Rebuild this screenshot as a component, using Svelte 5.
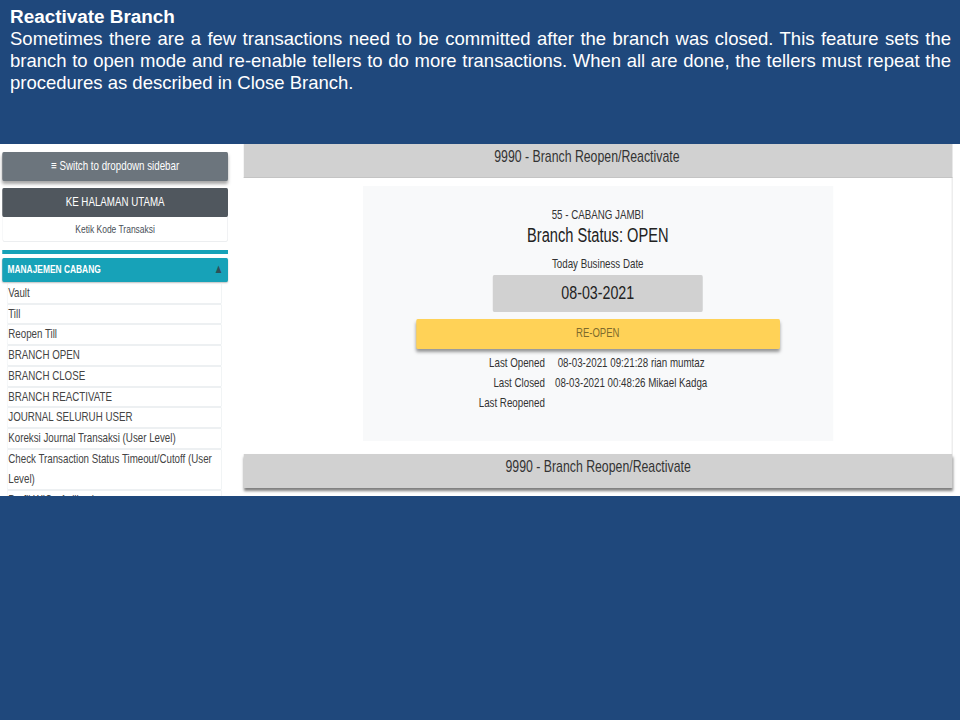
<script>
  const menu_items = [
    'Vault',
    'Till',
    'Reopen Till',
    'BRANCH OPEN',
    'BRANCH CLOSE',
    'BRANCH REACTIVATE',
    'JOURNAL SELURUH USER',
    'Koreksi Journal Transaksi (User Level)',
    'Check Transaction Status Timeout/Cutoff (User Level)',
    'Profil WIC - Aplikasi'
  ]

  const history = [
    { label: 'Last Opened', value: '08-03-2021 09:21:28 rian mumtaz' },
    { label: 'Last Closed', value: '08-03-2021 00:48:26 Mikael Kadga' },
    { label: 'Last Reopened', value: '' }
  ]
</script>

<div class="slide">
  <section class="intro">
    <h1>Reactivate Branch</h1>
    <p>
      Sometimes there are a few transactions need to be committed after the branch was closed. This feature sets the
      branch to open mode and re-enable tellers to do more transactions. When all are done, the tellers must repeat the
      procedures as described in Close Branch.
    </p>
  </section>

  <!-- the pasted screenshot is 1280 wide, squeezed to fit the slide -->
  <section class="shot">
    <aside class="sidebar">
      <button class="switch-button">≡ Switch to dropdown sidebar</button>
      <button class="home-button">KE HALAMAN UTAMA</button>
      <div class="code-input">Ketik Kode Transaksi</div>
      <div class="teal-rule"></div>
      <div class="group-head">
        <span>MANAJEMEN CABANG</span>
        <span class="caret">▲</span>
      </div>
      <ul class="menu">
        {#each menu_items as item}
          <li>{item}</li>
        {/each}
      </ul>
    </aside>

    <main class="panel">
      <header class="panel-head">9990 - Branch Reopen/Reactivate</header>
      <div class="panel-body">
        <div class="card">
          <div class="branch-name">55 - CABANG JAMBI</div>
          <div class="branch-status">Branch Status: OPEN</div>
          <div class="date-label">Today Business Date</div>
          <div class="date-box">08-03-2021</div>
          <button class="reopen-button">RE-OPEN</button>
          <div class="history">
            {#each history as row}
              <span class="history-label">{row.label}</span>
              <span class="history-value">{row.value}</span>
            {/each}
          </div>
        </div>
      </div>
      <footer class="panel-foot">9990 - Branch Reopen/Reactivate</footer>
    </main>
  </section>
</div>

<style>
  :global(body) {
    margin: 0;
    background: #1f487c;
  }

  .slide {
    width: 960px;
    height: 720px;
    background: #1f487c;
    overflow: hidden;
    font-family: "Liberation Sans", Arial, sans-serif;
  }

  .intro {
    box-sizing: border-box;
    height: 144px;
    padding: 6px 9px 0 10px;
    color: #fff;
    font-size: 18.5px;
    line-height: 22px;
  }

  h1 {
    margin: 0;
    font-size: 18.9px;
    line-height: 22px;
    font-weight: 700;
  }

  .intro p {
    margin: 0;
    text-align: justify;
  }

  .shot {
    display: flex;
    align-items: flex-start;
    width: 1280px;
    height: 352px;
    overflow: hidden;
    background: #fff;
    transform: scaleX(0.75);
    transform-origin: left top;
  }

  button {
    display: block;
    padding: 0 0 2px;
    border: none;
    font-family: inherit;
  }

  .sidebar {
    flex: none;
    box-sizing: border-box;
    width: 301px;
    margin: 8px 0 0 3px;
  }

  .switch-button {
    width: 100%;
    height: 29px;
    margin-bottom: 7px;
    border-radius: 2px;
    background: #6c757d;
    color: #fff;
    font-size: 13px;
    box-shadow: 0 3px 4px rgba(0, 0, 0, 0.35);
  }

  .home-button {
    width: 100%;
    height: 29px;
    border-radius: 2px;
    background: #50575e;
    color: #fff;
    font-size: 13px;
  }

  .code-input {
    box-sizing: border-box;
    height: 25px;
    border: 1px solid #eceef0;
    border-top: none;
    border-radius: 0 0 3px 3px;
    color: #495057;
    font-size: 11.3px;
    line-height: 24px;
    text-align: center;
  }

  .teal-rule {
    height: 4px;
    margin-top: 8px;
    background: #17a2b8;
  }

  .group-head {
    display: flex;
    justify-content: space-between;
    align-items: center;
    box-sizing: border-box;
    height: 24px;
    margin-top: 4px;
    padding: 0 6px 3px 7px;
    border-radius: 2px;
    background: #17a2b8;
    color: #fff;
    font-size: 11.2px;
    font-weight: 700;
    box-shadow: 0 1px 2px rgba(0, 0, 0, 0.25);
  }

  .caret {
    color: #2f4f57;
    font-size: 13px;
  }

  .menu {
    margin: 1px 8px 0 6px;
    padding: 0;
    list-style: none;
  }

  .menu li {
    padding: 0 2px;
    border-radius: 2px;
    box-shadow: inset 0 0 0 1px #edf0f2;
    color: #444;
    font-size: 13px;
    line-height: 20.7px;
  }

  .panel {
    flex: none;
    width: 945px;
    margin-left: 21px;
  }

  .panel-head {
    box-sizing: border-box;
    height: 34px;
    padding-right: 30px;
    border-bottom: 1px solid #c4c4c4;
    background: #d1d1d1;
    color: #333;
    font-size: 16.4px;
    line-height: 25px;
    text-align: center;
  }

  .panel-body {
    box-sizing: border-box;
    height: 276px;
    padding-top: 8px;
    border-right: 1px solid #dcdcdc;
  }

  .card {
    box-sizing: border-box;
    width: 627px;
    height: 255px;
    margin: 0 auto;
    padding-top: 21px;
    background: #f8f9fa;
    color: #333;
    text-align: center;
  }

  .branch-name {
    font-size: 13px;
    line-height: 16px;
  }

  .branch-status {
    font-size: 19.5px;
    line-height: 24px;
    color: #222;
  }

  .date-label {
    margin-top: 9px;
    font-size: 13px;
    line-height: 16px;
  }

  .date-box {
    width: 280px;
    height: 37px;
    margin: 3px auto 0;
    border-radius: 2px;
    background: #d1d1d1;
    color: #222;
    font-size: 19px;
    line-height: 36px;
  }

  .reopen-button {
    width: 485px;
    height: 30px;
    margin: 7px auto 0;
    border-radius: 2px;
    background: #ffd257;
    color: #7d6a2c;
    font-size: 12.7px;
    box-shadow: 0 3px 4px rgba(0, 0, 0, 0.4);
  }

  .history {
    display: grid;
    grid-template-columns: 243px 230px;
    grid-auto-rows: 20px;
    margin-top: 4px;
    font-size: 13px;
    line-height: 20px;
  }

  .history-label {
    text-align: right;
  }

  .panel-foot {
    height: 34px;
    background: #d1d1d1;
    color: #333;
    font-size: 16.4px;
    line-height: 25px;
    text-align: center;
    box-shadow: 0 3px 3px rgba(0, 0, 0, 0.5);
  }
</style>
